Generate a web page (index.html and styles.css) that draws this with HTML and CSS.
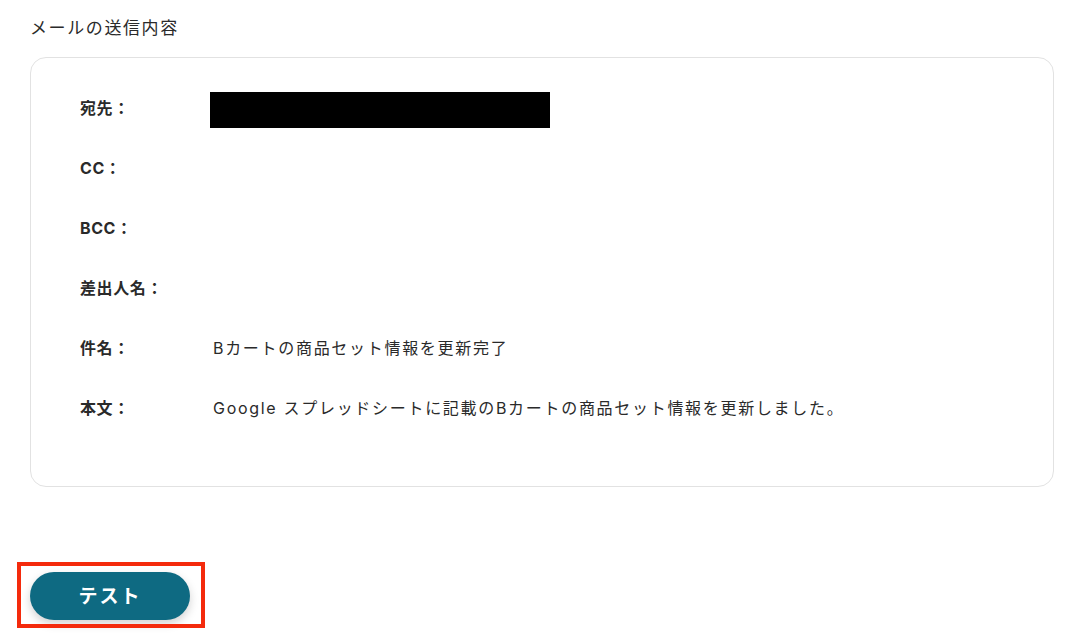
FILE: index.html
```html
<!DOCTYPE html>
<html lang="ja">
<head>
<meta charset="utf-8">
<link rel="stylesheet" href="styles.css">
</head>
<body>
<main class="page">
  <h2 class="section-title">メールの送信内容</h2>
  <section class="card">
    <div class="field-row">
      <div class="field-label">宛先：</div>
      <div class="field-value field-value--redacted"><span class="redacted"></span></div>
    </div>
    <div class="field-row">
      <div class="field-label">CC：</div>
      <div class="field-value"></div>
    </div>
    <div class="field-row">
      <div class="field-label">BCC：</div>
      <div class="field-value"></div>
    </div>
    <div class="field-row">
      <div class="field-label">差出人名：</div>
      <div class="field-value"></div>
    </div>
    <div class="field-row">
      <div class="field-label">件名：</div>
      <div class="field-value">Bカートの商品セット情報を更新完了</div>
    </div>
    <div class="field-row">
      <div class="field-label">本文：</div>
      <div class="field-value">Google スプレッドシートに記載のBカートの商品セット情報を更新しました。</div>
    </div>
  </section>
  <div class="actions">
    <button class="test-button" type="button">テスト</button>
    <span class="highlight-box"></span>
  </div>
</main>
</body>
</html>
```

FILE: styles.css
```css
* { box-sizing: border-box; }

html, body {
  margin: 0;
  padding: 0;
  background: #ffffff;
}

body {
  font-family: "Inter", "Noto Sans CJK JP", sans-serif;
  color: #2a2a2a;
  width: 1070px;
  height: 638px;
  overflow: hidden;
}

.page {
  padding: 16px 16px 0 30px;
}

.section-title {
  margin: 0;
  font-size: 17px;
  font-weight: 400;
  letter-spacing: 1.6px;
  line-height: 24px;
  color: #2a2a2a;
}

.card {
  margin-top: 17px;
  width: 1024px;
  height: 430px;
  border: 1px solid #e2e2e2;
  border-radius: 16px;
  padding: 34px 0 0 49px;
  display: flex;
  flex-direction: column;
  gap: 30px;
}

.field-row {
  display: flex;
  align-items: center;
  height: 30px;
}

.field-label {
  width: 130px;
  font-size: 16px;
  font-weight: 700;
  letter-spacing: 0.6px;
  color: #2a2a2a;
}

.field-value {
  font-size: 16px;
  letter-spacing: 1.7px;
  color: #2a2a2a;
  padding-left: 3px;
}

.field-value--redacted {
  align-self: flex-start;
  padding-left: 0;
}

.redacted {
  display: block;
  width: 340px;
  height: 36px;
  background: #000000;
}

.actions {
  position: relative;
  margin-top: 85px;
  width: 160px;
}

.test-button {
  display: block;
  width: 160px;
  height: 48px;
  padding: 0 0 3px;
  border: none;
  border-radius: 24px;
  background: #0e6a82;
  color: #ffffff;
  font-family: "Inter", "Noto Sans CJK JP", sans-serif;
  font-size: 19px;
  font-weight: 700;
  letter-spacing: 2px;
  box-shadow: 0 4px 10px rgba(0, 0, 0, 0.18);
  cursor: pointer;
}

.highlight-box {
  position: absolute;
  left: -13px;
  top: -10px;
  width: 188px;
  height: 66px;
  border: 4px solid #f42a0c;
  pointer-events: none;
}
```
